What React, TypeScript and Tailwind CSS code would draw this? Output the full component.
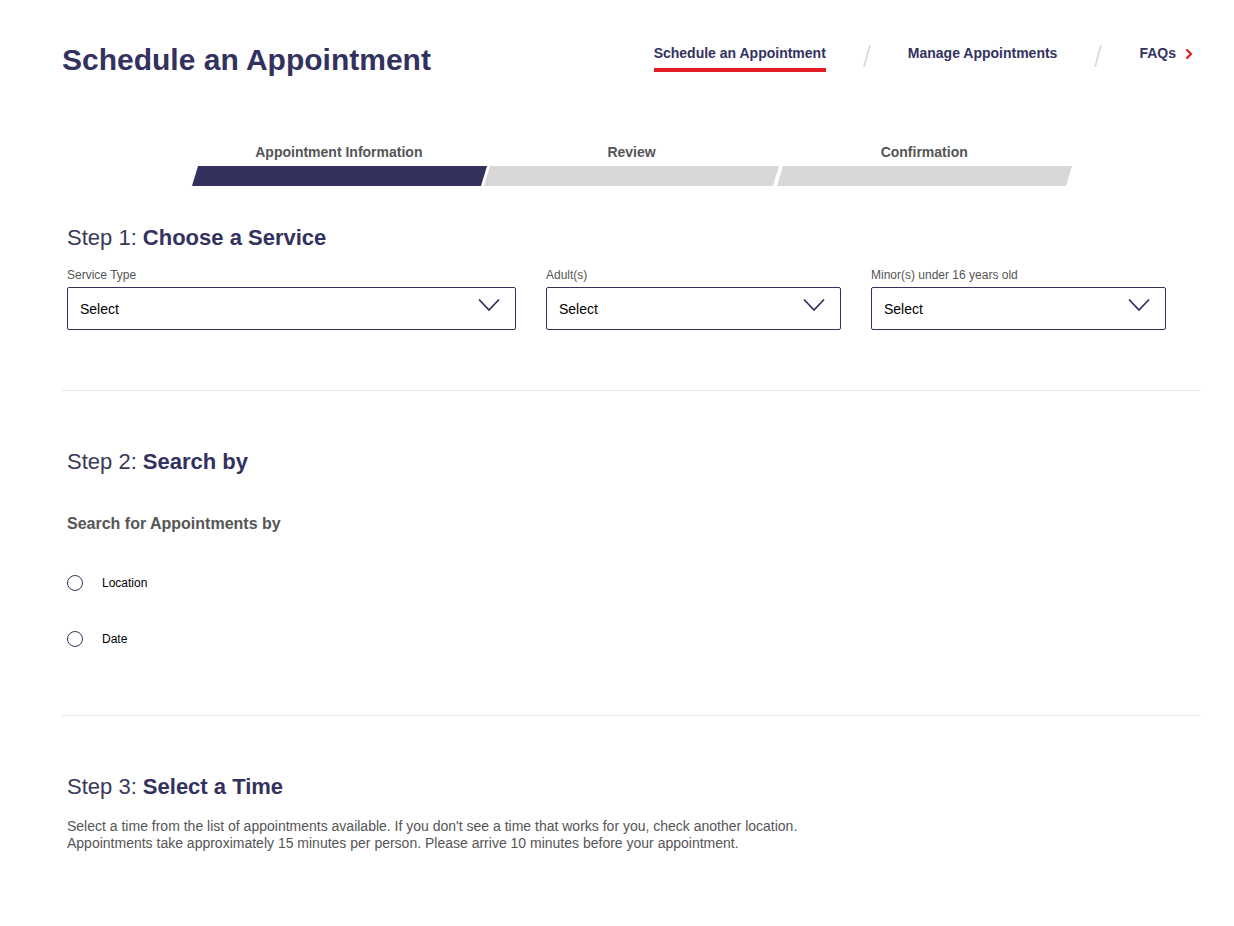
import { ChevronRight } from "lucide-react";

const navy = "text-[#33325f]";

function SelectBox({ label, width }: { label: string; width: string }) {
  return (
    <div className={`flex flex-col ${width}`}>
      <label className="mb-[5px] text-[12px] leading-[14px] text-[#555]">{label}</label>
      <div className="flex h-[43px] items-center justify-between rounded-[2px] border border-[#33325f] bg-white pl-[12px] pr-[15px]">
        <span className="pt-[2px] text-[14px] text-black">Select</span>
        <svg width="22" height="14" viewBox="0 0 22 14" className="-mt-[7px]" aria-hidden>
          <polyline points="1,1.5 11,12 21,1.5" fill="none" stroke="#33325f" strokeWidth="1.8" />
        </svg>
      </div>
    </div>
  );
}

function StepHeading({ n, title }: { n: number; title: string }) {
  return (
    <h2 className={`text-[22px] leading-[26px] ${navy}`}>
      <span className="font-normal text-[#3a3958]">Step {n}: </span>
      <span className="font-bold">{title}</span>
    </h2>
  );
}

function Radio({ label }: { label: string }) {
  return (
    <label className="flex items-center gap-[19px]">
      <span className="size-[16px] rounded-full border border-[#33325f] bg-white" />
      <span className="text-[12px] text-black">{label}</span>
    </label>
  );
}

export default function App() {
  const steps = [
    { label: "Appointment Information", active: true },
    { label: "Review", active: false },
    { label: "Confirmation", active: false },
  ];

  return (
    <div className="min-h-[926px] w-full bg-white font-['Liberation_Sans',Arial,sans-serif]">
      <div className="pl-[62px] pr-[33px] pt-[42px]">
        <header className="flex items-start justify-between">
          <h1 className={`text-[30px] font-bold leading-[36px] ${navy}`}>Schedule an Appointment</h1>
          <nav className="mr-[4px] flex items-center pt-[1px] text-[14px] font-bold text-[#33325f]">
            <a className="border-b-[4px] border-[#e31c23] pb-[4px]">Schedule an Appointment</a>
            <span className="mx-[40px] -mt-[4px] h-[22px] w-[2px] skew-x-[-15deg] bg-[#dcdcdc]" />
            <a className="pb-[8px]">Manage Appointments</a>
            <span className="mx-[40px] -mt-[4px] h-[22px] w-[2px] skew-x-[-15deg] bg-[#dcdcdc]" />
            <a className="flex items-center gap-[5px] pb-[8px]">
              FAQs
              <ChevronRight className="size-[16px] text-[#e31c23]" strokeWidth={3.2} />
            </a>
          </nav>
        </header>

        <div className="mx-auto mt-[66px] w-[874px]">
          <div className="flex gap-[4px]">
            {steps.map((s) => (
              <div key={s.label} className="flex flex-1 flex-col items-center">
                <span className="mb-[6px] text-[14px] font-bold leading-[16px] text-[#555]">{s.label}</span>
                <div
                  className={`h-[20px] w-full skew-x-[-17deg] ${s.active ? "bg-[#33325f]" : "bg-[#d8d8d8]"}`}
                />
              </div>
            ))}
          </div>
        </div>

        <section className="px-[5px] pt-[39px] pb-[60px]">
          <StepHeading n={1} title="Choose a Service" />
          <div className="mt-[17px] flex gap-[30px]">
            <SelectBox label="Service Type" width="w-[449px]" />
            <SelectBox label="Adult(s)" width="w-[295px]" />
            <SelectBox label="Minor(s) under 16 years old" width="w-[295px]" />
          </div>
        </section>

        <hr className="border-t border-[#e8e8e8]" />

        <section className="px-[5px] pt-[58px] pb-[67px]">
          <StepHeading n={2} title="Search by" />
          <h3 className="mt-[40px] text-[16px] font-bold leading-[18px] text-[#555]">Search for Appointments by</h3>
          <div className="mt-[41px] flex flex-col gap-[38px]">
            <Radio label="Location" />
            <Radio label="Date" />
          </div>
        </section>

        <hr className="border-t border-[#e8e8e8]" />

        <section className="px-[5px] pt-[58px]">
          <StepHeading n={3} title="Select a Time" />
          <p className="mt-[18px] text-[14px] leading-[17px] text-[#555]">
            Select a time from the list of appointments available. If you don't see a time that works for you, check another location.
            <br />
            Appointments take approximately 15 minutes per person. Please arrive 10 minutes before your appointment.
          </p>
        </section>
      </div>
    </div>
  );
}
